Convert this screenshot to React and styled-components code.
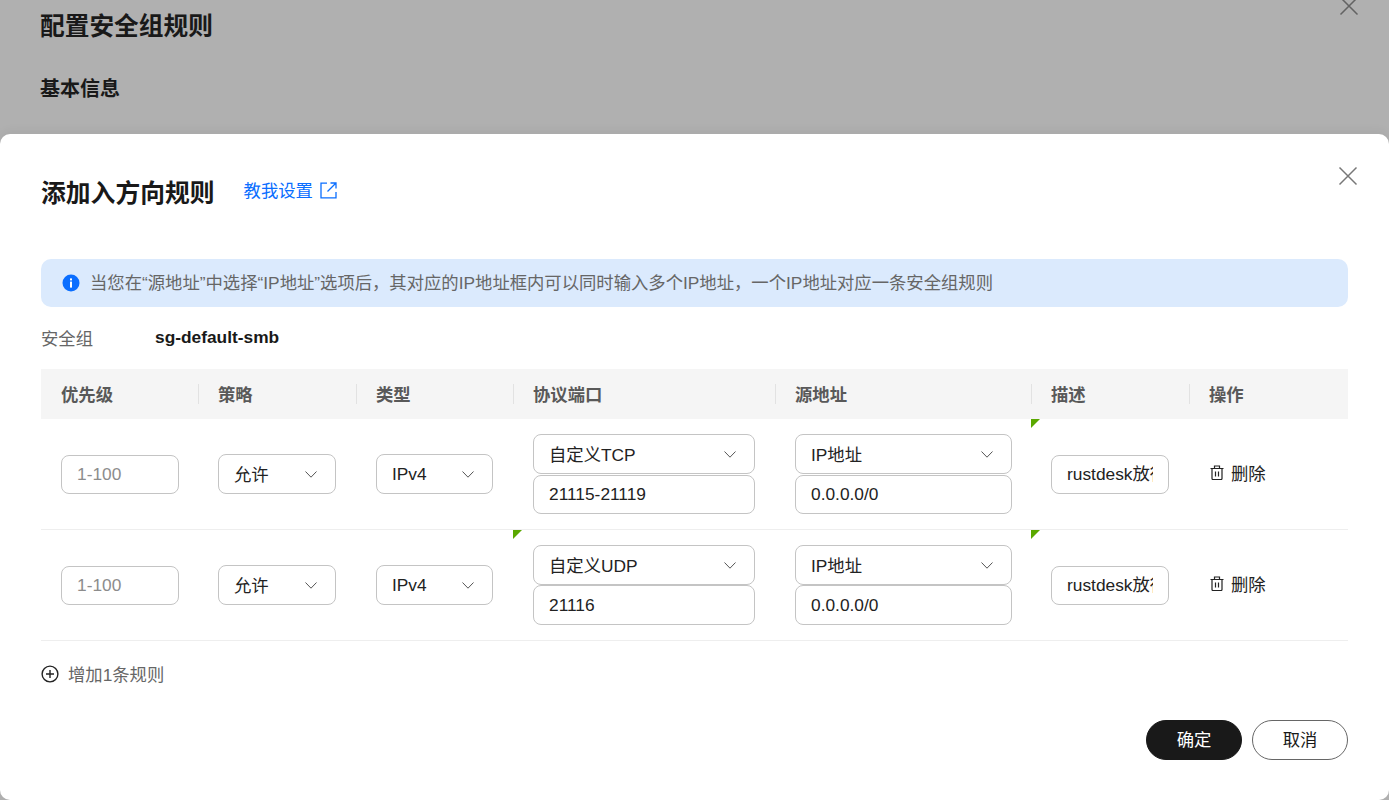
import React from "react";
import styled, { createGlobalStyle } from "styled-components";

const GlobalStyle = createGlobalStyle`
  html, body {
    margin: 0;
    height: 100%;
    overflow: hidden;
    background: #b0b0b0;
  }
  body, input, button {
    font-family: "Liberation Sans", "Noto Sans CJK SC", sans-serif;
  }
  * {
    box-sizing: border-box;
  }
`;

const COLUMNS = "158px 158px 157px 262px 256px 158px 158px";
const HEADERS = ["优先级", "策略", "类型", "协议端口", "源地址", "描述", "操作"];

const RULES = [
  {
    protocol: "自定义TCP",
    port: "21115-21119",
    flags: { source: false, desc: true },
    stackGap: 1,
    inputHeight: 39,
  },
  {
    protocol: "自定义UDP",
    port: "21116",
    flags: { source: true, desc: true },
    stackGap: 0,
    inputHeight: 40,
  },
];

const CloseIcon = () => (
  <svg width="20" height="20" viewBox="0 0 20 20" fill="none" stroke="currentColor" strokeWidth="1.5">
    <path d="M1.5 1.5 18.5 18.5M18.5 1.5 1.5 18.5" />
  </svg>
);

const Chevron = () => (
  <svg width="12" height="7" viewBox="0 0 12 7" fill="none" stroke="#555" strokeWidth="1">
    <path d="M.5.5 6 6.2 11.5.5" />
  </svg>
);

const InfoIcon = () => (
  <svg width="18" height="18" viewBox="0 0 18 18">
    <circle cx="9" cy="9" r="8.5" fill="#0a6eff" />
    <rect x="8" y="7.6" width="2" height="6" fill="#fff" />
    <rect x="8" y="4.4" width="2" height="2" fill="#fff" />
  </svg>
);

const ExternalIcon = () => (
  <LinkIconWrap>
    <svg width="17" height="17" viewBox="0 0 17 17" fill="none" stroke="currentColor" strokeWidth="1.3">
      <path d="M7 1.2H1v14.6h15V10M10.5 1H16v5.5M16 1 7.5 9.5" />
    </svg>
  </LinkIconWrap>
);

const TrashIcon = () => (
  <svg width="14" height="15" viewBox="0 0 14 15" fill="none" stroke="#222" strokeWidth="1.2">
    <path d="M.5 3.5h13M4.5 3.5V1h5v2.5M2 3.5v10a1 1 0 0 0 1 1h8a1 1 0 0 0 1-1v-10M5.5 6.5v5M8.5 6.5v5" />
  </svg>
);

const PlusIcon = () => (
  <svg width="18" height="18" viewBox="0 0 18 18" fill="none" stroke="#222" strokeWidth="1.4">
    <circle cx="9" cy="9" r="7.9" />
    <path d="M9 5v8M5 9h8" />
  </svg>
);

const Select = ({ width, latin, children }) => (
  <SelectBox $width={width}>
    <SelectText $latin={latin}>{children}</SelectText>
    <Chevron />
  </SelectBox>
);

const App = () => {
  return (
    <Page>
      <GlobalStyle />
      <Backdrop>
        <BackClose>
          <CloseIcon />
        </BackClose>
        <BackTitle>配置安全组规则</BackTitle>
        <BackSection>基本信息</BackSection>
      </Backdrop>
      <Modal>
        <ModalClose>
          <CloseIcon />
        </ModalClose>
        <ModalHeader>
          <ModalTitle>添加入方向规则</ModalTitle>
          <HelpLink>
            教我设置
            <ExternalIcon />
          </HelpLink>
        </ModalHeader>
        <Alert>
          <InfoIcon />
          <AlertText>
            当您在“源地址”中选择“IP地址”选项后，其对应的IP地址框内可以同时输入多个IP地址，一个IP地址对应一条安全组规则
          </AlertText>
        </Alert>
        <GroupRow>
          <GroupLabel>安全组</GroupLabel>
          <GroupName>sg-default-smb</GroupName>
        </GroupRow>
        <HeadRow>
          {HEADERS.map((title) => (
            <HeadCell key={title}>{title}</HeadCell>
          ))}
        </HeadRow>
        {RULES.map((rule) => (
          <RuleRow key={rule.port}>
            <Cell>
              <TextInput $width={118} placeholder="1-100" readOnly />
            </Cell>
            <Cell>
              <Select width={118}>允许</Select>
            </Cell>
            <Cell>
              <Select width={117} latin>
                IPv4
              </Select>
            </Cell>
            <Cell $flag={rule.flags.source}>
              <Stack $gap={rule.stackGap}>
                <Select width={222}>{rule.protocol}</Select>
                <TextInput $width={222} $height={rule.inputHeight} value={rule.port} readOnly />
              </Stack>
            </Cell>
            <Cell>
              <Stack $gap={rule.stackGap}>
                <Select width={217}>IP地址</Select>
                <TextInput $width={217} $height={rule.inputHeight} value="0.0.0.0/0" readOnly />
              </Stack>
            </Cell>
            <Cell $flag={rule.flags.desc}>
              <TextInput $width={118} $cjk value="rustdesk放行端口" readOnly />
            </Cell>
            <Cell>
              <DeleteAction>
                <TrashIcon />
                删除
              </DeleteAction>
            </Cell>
          </RuleRow>
        ))}
        <AddRule>
          <PlusIcon />
          <AddLabel>增加1条规则</AddLabel>
        </AddRule>
        <Footer>
          <PillButton $primary>确定</PillButton>
          <PillButton>取消</PillButton>
        </Footer>
      </Modal>
    </Page>
  );
};

const Page = styled.div`
  width: 100%;
  height: 800px;
  display: flex;
  flex-direction: column;
  overflow: hidden;
`;

const Backdrop = styled.div`
  position: relative;
  height: 134px;
  flex: none;
  padding: 13px 0 0 40px;
  background: #b0b0b0;
`;

const BackTitle = styled.div`
  font-size: 24.7px;
  line-height: 28px;
  font-weight: 700;
  color: #191919;
`;

const BackSection = styled.div`
  margin-top: 34px;
  font-size: 20px;
  line-height: 28px;
  font-weight: 700;
  color: #191919;
`;

const BackClose = styled.div`
  position: absolute;
  top: -4px;
  left: 1339px;
  color: #636363;
  line-height: 0;
`;

const Modal = styled.div`
  position: relative;
  flex: 1;
  padding: 0 41px;
  background: #fff;
  border-radius: 10px;
  box-shadow: 0 -4px 10px rgba(0, 0, 0, 0.04);
`;

const ModalClose = styled.div`
  position: absolute;
  top: 32px;
  right: 31px;
  color: #777;
  line-height: 0;
`;

const ModalHeader = styled.div`
  height: 125px;
  padding-top: 40px;
  display: flex;
  align-items: flex-start;
  gap: 29px;
`;

const ModalTitle = styled.div`
  font-size: 24.8px;
  line-height: 40px;
  font-weight: 700;
  color: #191919;
`;

const HelpLink = styled.div`
  height: 30px;
  display: flex;
  align-items: center;
  gap: 7px;
  font-size: 17.33px;
  color: #0a6eff;
`;

const LinkIconWrap = styled.span`
  display: flex;
  margin-top: 2px;
`;

const Alert = styled.div`
  height: 48px;
  display: flex;
  align-items: center;
  gap: 10px;
  padding-left: 21px;
  border-radius: 10px;
  background: #dbeafd;
  font-size: 17.33px;
  color: #666;
  white-space: nowrap;
`;

const AlertText = styled.span`
  margin-top: -3px;
`;

const GroupRow = styled.div`
  height: 62px;
  display: flex;
  align-items: center;
`;

const GroupLabel = styled.div`
  width: 114px;
  margin-top: -2px;
  font-size: 17.33px;
  color: #666;
`;

const GroupName = styled.div`
  font-size: 17.33px;
  font-weight: 700;
  color: #191919;
  margin-top: -1px;
`;

const HeadRow = styled.div`
  height: 50px;
  display: grid;
  grid-template-columns: ${COLUMNS};
  background: #f5f5f5;
`;

const HeadCell = styled.div`
  position: relative;
  display: flex;
  align-items: center;
  padding: 0 0 2px 19px;
  font-size: 17.33px;
  font-weight: 700;
  color: #595959;

  &:nth-child(1) {
    padding-left: 20px;
  }

  &:not(:first-child)::before {
    content: "";
    position: absolute;
    left: -1px;
    top: 15px;
    width: 1px;
    height: 20px;
    background: #e2e2e2;
  }
`;

const RuleRow = styled.div`
  height: 111px;
  display: grid;
  grid-template-columns: ${COLUMNS};
  border-bottom: 1px solid #eee;
`;

const Cell = styled.div`
  position: relative;
  display: flex;
  align-items: center;
  padding-left: 19px;

  &:nth-child(1) {
    padding-left: 20px;
  }

  /* green corner on edited cells, sits on the previous column edge */
  &:nth-child(6)::before,
  &:nth-child(4)::before {
    content: ${(props) => (props.$flag ? '""' : "none")};
    position: absolute;
    top: 0;
    left: -1px;
    border-top: 9px solid #5aa800;
    border-right: 9px solid transparent;
  }
`;

const Stack = styled.div`
  display: flex;
  flex-direction: column;
  gap: ${(props) => props.$gap}px;
`;

const SelectBox = styled.div`
  width: ${(props) => props.$width}px;
  height: 40px;
  flex: none;
  display: flex;
  align-items: center;
  justify-content: space-between;
  padding: 0 18px 0 15px;
  border: 1px solid #c4c4c4;
  border-radius: 8px;
  background: #fff;
  font-size: 17.33px;
  color: #222;
`;

const SelectText = styled.span`
  margin-top: ${(props) => (props.$latin ? "0" : "-2px")};
`;

const TextInput = styled.input`
  width: ${(props) => props.$width}px;
  height: ${(props) => props.$height || 39}px;
  flex: none;
  padding: 0 15px ${(props) => (props.$cjk ? "3px" : "0")};
  border: 1px solid #c4c4c4;
  border-radius: 8px;
  outline: none;
  background: #fff;
  font-size: 17.33px;
  color: #222;

  &::placeholder {
    color: #8c8c8c;
    opacity: 1;
  }
`;

const DeleteAction = styled.div`
  display: flex;
  align-items: center;
  gap: 7px;
  margin-top: -3px;
  padding-left: 1px;
  font-size: 17.33px;
  color: #222;
`;

const AddRule = styled.div`
  height: 66px;
  display: flex;
  align-items: center;
  gap: 9px;
  font-size: 17.33px;
  color: #666;
`;

const AddLabel = styled.span`
  margin-top: -2px;
`;

const Footer = styled.div`
  margin-top: 13px;
  display: flex;
  justify-content: flex-end;
  gap: 10px;
`;

const PillButton = styled.button`
  width: 96px;
  height: 40px;
  padding: 0 0 4px;
  border: 1px solid ${(props) => (props.$primary ? "#191919" : "#666")};
  border-radius: 20px;
  background: ${(props) => (props.$primary ? "#191919" : "#fff")};
  font-size: 17.33px;
  color: ${(props) => (props.$primary ? "#fff" : "#191919")};
`;

export default App;
